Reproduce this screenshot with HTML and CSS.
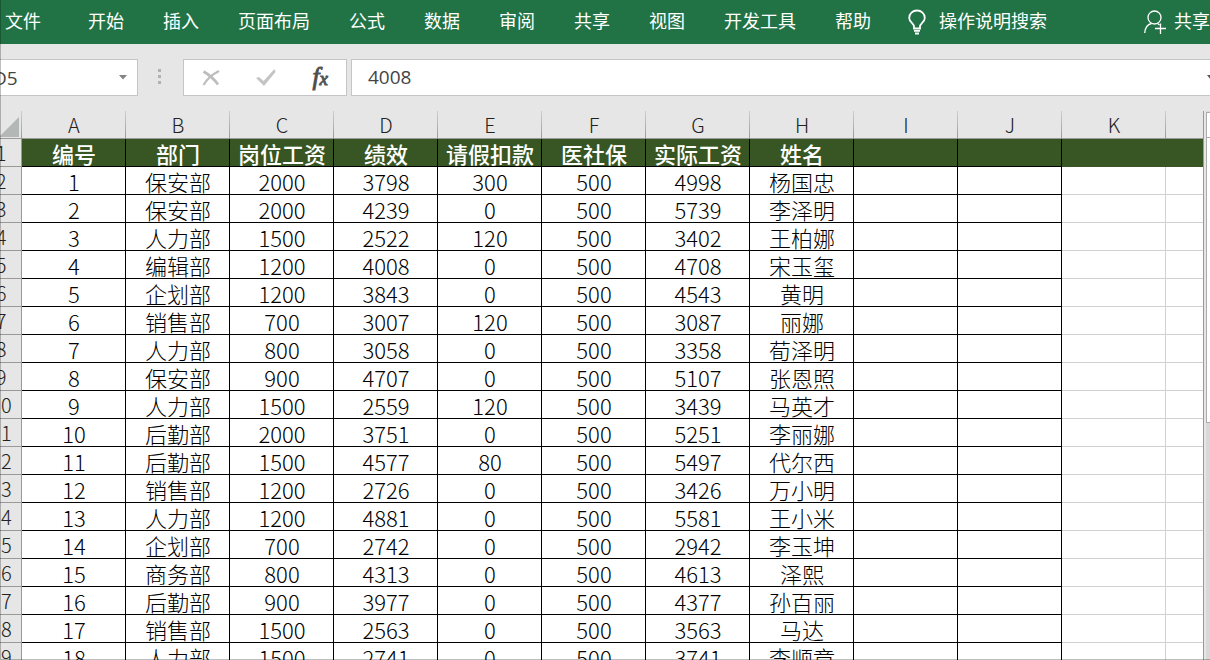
FILE: index.html
```
<!DOCTYPE html>
<html lang="zh-CN">
<head>
    <meta charset="UTF-8">
    <title>工资表</title>
    <link rel="stylesheet" href="styles.css">
</head>

<body>
<div class="app">
    <nav class="ribbon">
        <button class="tab file">文件</button>
        <button class="tab">开始</button>
        <button class="tab">插入</button>
        <button class="tab">页面布局</button>
        <button class="tab">公式</button>
        <button class="tab">数据</button>
        <button class="tab">审阅</button>
        <button class="tab">共享</button>
        <button class="tab">视图</button>
        <button class="tab">开发工具</button>
        <button class="tab">帮助</button>
        <button class="tab tell-me">
            <svg width="18" height="26" viewBox="0 0 18 26" fill="none" stroke="#fff" stroke-width="1.800">
                <path d="M6 19.500V17.500C6 14.500 1.200 13 1.200 9C1.200 4.600 4.600 1.500 9 1.500S16.800 4.600 16.800 9C16.800 13 12 14.500 12 17.500V19.500Z"/>
                <path d="M6 21.800H12M7 24.500H11"/>
            </svg>
            操作说明搜索
        </button>
        <button class="tab share">
            <svg width="22" height="24" viewBox="0 0 22 24" fill="none" stroke="#fff" stroke-width="1.300">
                <circle cx="10.500" cy="7.500" r="6.500"/>
                <path d="M0.700 23C1 18.500 3.500 14.500 7.500 13.500M13.500 13.500L15.500 15M16.500 13.500V24M11 18.500H22"/>
            </svg>
            共享
        </button>
    </nav>

    <div class="formula-row">
        <div class="name-box">
            <input type="text" value="D5" aria-label="名称框">
            <button aria-label="名称列表"><svg width="8" height="5" viewBox="0 0 8 5"><path d="M0 0H8L4 4.500Z" fill="#848484"/></svg></button>
        </div>
        <div class="grip"><i></i><i></i><i></i></div>
        <div class="fx-box">
            <button aria-label="取消"><svg width="18" height="16" viewBox="0 0 18 16" fill="none" stroke="#bdbdbd"><path d="M1.500 1.500C6 4 12 9 16 14.500" stroke-width="2.800"/><path d="M17 1C11 4 5 9 1.500 15" stroke-width="2.200"/></svg></button>
            <button aria-label="输入"><svg width="20" height="17" viewBox="0 0 20 17"><path d="M0 9L3 8L7.500 12L18.500 0L19.500 3L8 17Z" fill="#c3c5c4"/></svg></button>
            <button class="fx" aria-label="插入函数">f<small>x</small></button>
        </div>
        <div class="formula-box">
            <input type="text" value="4008" aria-label="编辑栏">
            <button aria-label="展开编辑栏"><svg width="8" height="5" viewBox="0 0 8 5"><path d="M0 0H8L4 5Z" fill="#555"/></svg></button>
        </div>
    </div>

    <div class="sheet">
        <div class="grid">
        <table>
            <colgroup>
                <col class="num"><col class="c"><col class="c"><col class="c"><col class="c"><col class="c"><col class="c"><col class="c"><col class="c"><col class="c"><col class="c"><col class="c"><col>
            </colgroup>
            <thead>
                <tr><th class="corner"><svg width="20" height="20" viewBox="0 0 20 20"><path d="M20 0V20H0Z" fill="#b3b7b5"/></svg></th><th>A</th><th>B</th><th>C</th><th>D</th><th>E</th><th>F</th><th>G</th><th>H</th><th>I</th><th>J</th><th>K</th><th></th></tr>
            </thead>
            <tbody>
                <tr class="title"><th>1</th><td>编号</td><td>部门</td><td>岗位工资</td><td>绩效</td><td>请假扣款</td><td>医社保</td><td>实际工资</td><td>姓名</td><td></td><td></td><td></td><td></td></tr>
                <tr><th>2</th><td>1</td><td>保安部</td><td>2000</td><td>3798</td><td>300</td><td>500</td><td>4998</td><td>杨国忠</td><td></td><td></td><td></td><td></td></tr>
                <tr><th>3</th><td>2</td><td>保安部</td><td>2000</td><td>4239</td><td>0</td><td>500</td><td>5739</td><td>李泽明</td><td></td><td></td><td></td><td></td></tr>
                <tr><th>4</th><td>3</td><td>人力部</td><td>1500</td><td>2522</td><td>120</td><td>500</td><td>3402</td><td>王柏娜</td><td></td><td></td><td></td><td></td></tr>
                <tr><th>5</th><td>4</td><td>编辑部</td><td>1200</td><td>4008</td><td>0</td><td>500</td><td>4708</td><td>宋玉玺</td><td></td><td></td><td></td><td></td></tr>
                <tr><th>6</th><td>5</td><td>企划部</td><td>1200</td><td>3843</td><td>0</td><td>500</td><td>4543</td><td>黄明</td><td></td><td></td><td></td><td></td></tr>
                <tr><th>7</th><td>6</td><td>销售部</td><td>700</td><td>3007</td><td>120</td><td>500</td><td>3087</td><td>丽娜</td><td></td><td></td><td></td><td></td></tr>
                <tr><th>8</th><td>7</td><td>人力部</td><td>800</td><td>3058</td><td>0</td><td>500</td><td>3358</td><td>荀泽明</td><td></td><td></td><td></td><td></td></tr>
                <tr><th>9</th><td>8</td><td>保安部</td><td>900</td><td>4707</td><td>0</td><td>500</td><td>5107</td><td>张恩照</td><td></td><td></td><td></td><td></td></tr>
                <tr><th>10</th><td>9</td><td>人力部</td><td>1500</td><td>2559</td><td>120</td><td>500</td><td>3439</td><td>马英才</td><td></td><td></td><td></td><td></td></tr>
                <tr><th>11</th><td>10</td><td>后勤部</td><td>2000</td><td>3751</td><td>0</td><td>500</td><td>5251</td><td>李丽娜</td><td></td><td></td><td></td><td></td></tr>
                <tr><th>12</th><td>11</td><td>后勤部</td><td>1500</td><td>4577</td><td>80</td><td>500</td><td>5497</td><td>代尔西</td><td></td><td></td><td></td><td></td></tr>
                <tr><th>13</th><td>12</td><td>销售部</td><td>1200</td><td>2726</td><td>0</td><td>500</td><td>3426</td><td>万小明</td><td></td><td></td><td></td><td></td></tr>
                <tr><th>14</th><td>13</td><td>人力部</td><td>1200</td><td>4881</td><td>0</td><td>500</td><td>5581</td><td>王小米</td><td></td><td></td><td></td><td></td></tr>
                <tr><th>15</th><td>14</td><td>企划部</td><td>700</td><td>2742</td><td>0</td><td>500</td><td>2942</td><td>李玉坤</td><td></td><td></td><td></td><td></td></tr>
                <tr><th>16</th><td>15</td><td>商务部</td><td>800</td><td>4313</td><td>0</td><td>500</td><td>4613</td><td>泽熙</td><td></td><td></td><td></td><td></td></tr>
                <tr><th>17</th><td>16</td><td>后勤部</td><td>900</td><td>3977</td><td>0</td><td>500</td><td>4377</td><td>孙百丽</td><td></td><td></td><td></td><td></td></tr>
                <tr><th>18</th><td>17</td><td>销售部</td><td>1500</td><td>2563</td><td>0</td><td>500</td><td>3563</td><td>马达</td><td></td><td></td><td></td><td></td></tr>
                <tr><th>19</th><td>18</td><td>人力部</td><td>1500</td><td>2741</td><td>0</td><td>500</td><td>3741</td><td>李顺章</td><td></td><td></td><td></td><td></td></tr>
            </tbody>
        </table>
        </div>
        <div class="scrollbar">
            <div class="arrow"></div>
            <div class="thumb"></div>
        </div>
    </div>
</div>
</body>
</html>
```
FILE: styles.css
```
* {
    box-sizing: border-box;
}

body {
    margin: 0;
    height: 100vh;
    overflow: hidden;
    background: #e6e6e6;
    font-family: "Noto Sans CJK SC", sans-serif;
}

/* window edge */
body::after {
    content: "";
    position: absolute;
    inset: 0;
    border-left: 1px solid rgba(0, 0, 0, 0.25);
    border-bottom: 1px solid rgba(0, 0, 0, 0.25);
    pointer-events: none;
}

button {
    padding: 0;
    border: none;
    background: none;
    font-family: inherit;
    cursor: pointer;
}

svg {
    display: block;
    flex: none;
}

/* the window is scrolled a little past its left side */
.app {
    display: flex;
    flex-direction: column;
    height: 100%;
    margin-left: -20px;
}

.ribbon {
    display: flex;
    gap: 39px;
    flex: none;
    height: 44px;
    padding-left: 25px;
    overflow: hidden;
    background: #217346;
}

.tab {
    display: flex;
    align-items: center;
    flex: none;
    height: 40px;
    color: #fff;
    font-size: 18px;
    line-height: 26px;
    white-space: nowrap;
}

.tab svg {
    margin-top: 4px;
}

.file {
    margin-right: 8px;
}

.tell-me {
    gap: 13px;
    margin-left: -2px;
}

.share {
    gap: 8px;
    margin-left: auto;
}

.formula-row {
    display: flex;
    flex: none;
    height: 37px;
    margin: 15px 0;
}

.name-box,
.fx-box,
.formula-box {
    display: flex;
    align-items: center;
    border: 1px solid #c3c5c6;
    background: #fff;
}

.formula-row input {
    flex: 1;
    min-width: 0;
    height: 35px;
    border: none;
    outline: none;
    background: none;
    color: #444;
    font-family: "Open Sans", sans-serif;
    font-size: 19px;
}

.name-box {
    width: 158px;
    padding-right: 10px;
}

.name-box input {
    padding: 0 0 0 12px;
}

.grip {
    display: flex;
    flex-direction: column;
    align-items: center;
    justify-content: center;
    gap: 3px;
    width: 45px;
    padding: 0 2px 2px 0;
}

.grip i {
    width: 3px;
    height: 3px;
    background: #b1b1b1;
}

.fx-box {
    justify-content: space-between;
    width: 164px;
    padding: 0 18px;
}

.fx {
    color: #444;
    font-family: "Liberation Serif", serif;
    font-size: 25px;
    font-style: italic;
    line-height: 28px;
    -webkit-text-stroke: 1px #555;
}

.fx small {
    font-size: 19px;
}

.formula-box {
    flex: 1;
    margin-left: 4px;
    margin-right: -6px;
}

.formula-box input {
    padding: 0 16px 2px;
}

.sheet {
    display: flex;
    flex: 1;
    min-height: 0;
}

.grid {
    flex: 1;
    min-width: 0;
    overflow: hidden;
    border-right: 1px solid #999;
}

table {
    width: 100%;
    table-layout: fixed;
    border-spacing: 0;
    color: #000;
    font-size: 22px;
    font-weight: 300;
    line-height: 26px;
    text-align: center;
}

.num {
    width: 42px;
}

.c {
    width: 104px;
}

th,
td {
    height: 28px;
    padding: 1px 0 0 1px;
    border-right: 1px solid #000;
    border-bottom: 1px solid #000;
    white-space: nowrap;
}

th {
    border-color: #999;
    background: #e6e6e6;
    color: #222;
    font-size: 20px;
    font-weight: 300;
}

thead th {
    border-right: 1px solid;
    border-image: linear-gradient(#d0d0d0, #999) 1;
}

.corner svg {
    margin: 3px 0 0 18px;
}

td {
    background: #fff;
}

td:nth-child(n+12) {
    border-color: #d0d0d0;
}

td:last-child,
thead th:last-child {
    border-right: none;
}

.title td {
    background: #375623;
    color: #fff;
    font-weight: 500;
}

.title td:nth-child(n+12) {
    border-color: #375623;
}

.scrollbar {
    display: flex;
    flex-direction: column;
    width: 6px;
    padding-left: 2px;
    background: linear-gradient(90deg, #e6e6e6 2px, #d9d9d9 2px);
}

.arrow,
.thumb {
    border: 1px solid #ababab;
    border-right: none;
    background: #fff;
}

.arrow {
    height: 26px;
    margin-top: 1px;
}

.thumb {
    height: 286px;
    margin-top: -1px;
}
```
